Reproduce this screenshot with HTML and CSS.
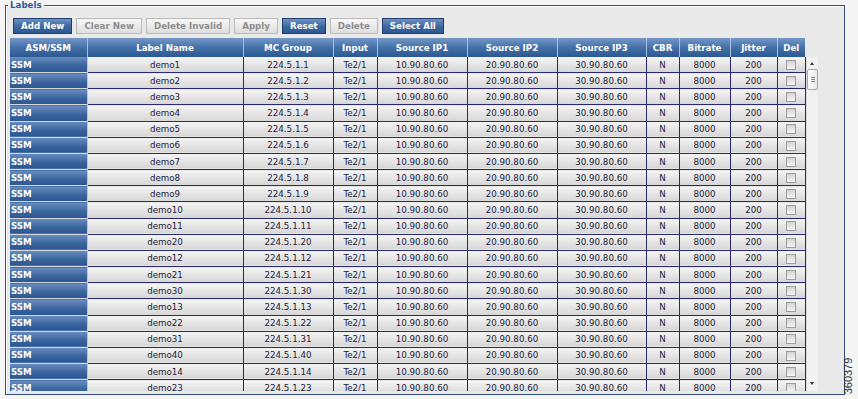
FILE: index.html
```html
<!DOCTYPE html>
<html lang="en">
<head>
<meta charset="UTF-8">
<title>Labels</title>
<link rel="stylesheet" href="styles.css">
</head>
<body>
<fieldset class="labels">
    <legend>Labels</legend>
    <div class="toolbar">
        <button class="btn">Add New</button>
        <button class="btn" disabled>Clear New</button>
        <button class="btn" disabled>Delete Invalid</button>
        <button class="btn" disabled>Apply</button>
        <button class="btn">Reset</button>
        <button class="btn" disabled>Delete</button>
        <button class="btn">Select All</button>
    </div>
    <table class="grid grid-head">
        <colgroup>
            <col class="c-mode"><col class="c-name"><col class="c-group"><col class="c-input">
            <col class="c-ip"><col class="c-ip"><col class="c-ip3"><col class="c-cbr">
            <col class="c-rate"><col class="c-jitter"><col class="c-del">
        </colgroup>
        <tr>
            <th>ASM/SSM</th><th>Label Name</th><th>MC Group</th><th>Input</th>
            <th>Source IP1</th><th>Source IP2</th><th>Source IP3</th><th>CBR</th>
            <th>Bitrate</th><th>Jitter</th><th>Del</th>
        </tr>
    </table>
    <div class="grid-body">
        <div class="grid-scroll">
            <table class="grid">
                <colgroup>
                    <col class="c-mode"><col class="c-name"><col class="c-group"><col class="c-input">
                    <col class="c-ip"><col class="c-ip"><col class="c-ip3"><col class="c-cbr">
                    <col class="c-rate"><col class="c-jitter"><col class="c-del">
                </colgroup>
                <tr><td class="mode">SSM</td><td>demo1</td><td>224.5.1.1</td><td>Te2/1</td><td>10.90.80.60</td><td>20.90.80.60</td><td>30.90.80.60</td><td>N</td><td>8000</td><td>200</td><td><input type="checkbox"></td></tr>
                <tr><td class="mode">SSM</td><td>demo2</td><td>224.5.1.2</td><td>Te2/1</td><td>10.90.80.60</td><td>20.90.80.60</td><td>30.90.80.60</td><td>N</td><td>8000</td><td>200</td><td><input type="checkbox"></td></tr>
                <tr><td class="mode">SSM</td><td>demo3</td><td>224.5.1.3</td><td>Te2/1</td><td>10.90.80.60</td><td>20.90.80.60</td><td>30.90.80.60</td><td>N</td><td>8000</td><td>200</td><td><input type="checkbox"></td></tr>
                <tr><td class="mode">SSM</td><td>demo4</td><td>224.5.1.4</td><td>Te2/1</td><td>10.90.80.60</td><td>20.90.80.60</td><td>30.90.80.60</td><td>N</td><td>8000</td><td>200</td><td><input type="checkbox"></td></tr>
                <tr><td class="mode">SSM</td><td>demo5</td><td>224.5.1.5</td><td>Te2/1</td><td>10.90.80.60</td><td>20.90.80.60</td><td>30.90.80.60</td><td>N</td><td>8000</td><td>200</td><td><input type="checkbox"></td></tr>
                <tr><td class="mode">SSM</td><td>demo6</td><td>224.5.1.6</td><td>Te2/1</td><td>10.90.80.60</td><td>20.90.80.60</td><td>30.90.80.60</td><td>N</td><td>8000</td><td>200</td><td><input type="checkbox"></td></tr>
                <tr><td class="mode">SSM</td><td>demo7</td><td>224.5.1.7</td><td>Te2/1</td><td>10.90.80.60</td><td>20.90.80.60</td><td>30.90.80.60</td><td>N</td><td>8000</td><td>200</td><td><input type="checkbox"></td></tr>
                <tr><td class="mode">SSM</td><td>demo8</td><td>224.5.1.8</td><td>Te2/1</td><td>10.90.80.60</td><td>20.90.80.60</td><td>30.90.80.60</td><td>N</td><td>8000</td><td>200</td><td><input type="checkbox"></td></tr>
                <tr><td class="mode">SSM</td><td>demo9</td><td>224.5.1.9</td><td>Te2/1</td><td>10.90.80.60</td><td>20.90.80.60</td><td>30.90.80.60</td><td>N</td><td>8000</td><td>200</td><td><input type="checkbox"></td></tr>
                <tr><td class="mode">SSM</td><td>demo10</td><td>224.5.1.10</td><td>Te2/1</td><td>10.90.80.60</td><td>20.90.80.60</td><td>30.90.80.60</td><td>N</td><td>8000</td><td>200</td><td><input type="checkbox"></td></tr>
                <tr><td class="mode">SSM</td><td>demo11</td><td>224.5.1.11</td><td>Te2/1</td><td>10.90.80.60</td><td>20.90.80.60</td><td>30.90.80.60</td><td>N</td><td>8000</td><td>200</td><td><input type="checkbox"></td></tr>
                <tr><td class="mode">SSM</td><td>demo20</td><td>224.5.1.20</td><td>Te2/1</td><td>10.90.80.60</td><td>20.90.80.60</td><td>30.90.80.60</td><td>N</td><td>8000</td><td>200</td><td><input type="checkbox"></td></tr>
                <tr><td class="mode">SSM</td><td>demo12</td><td>224.5.1.12</td><td>Te2/1</td><td>10.90.80.60</td><td>20.90.80.60</td><td>30.90.80.60</td><td>N</td><td>8000</td><td>200</td><td><input type="checkbox"></td></tr>
                <tr><td class="mode">SSM</td><td>demo21</td><td>224.5.1.21</td><td>Te2/1</td><td>10.90.80.60</td><td>20.90.80.60</td><td>30.90.80.60</td><td>N</td><td>8000</td><td>200</td><td><input type="checkbox"></td></tr>
                <tr><td class="mode">SSM</td><td>demo30</td><td>224.5.1.30</td><td>Te2/1</td><td>10.90.80.60</td><td>20.90.80.60</td><td>30.90.80.60</td><td>N</td><td>8000</td><td>200</td><td><input type="checkbox"></td></tr>
                <tr><td class="mode">SSM</td><td>demo13</td><td>224.5.1.13</td><td>Te2/1</td><td>10.90.80.60</td><td>20.90.80.60</td><td>30.90.80.60</td><td>N</td><td>8000</td><td>200</td><td><input type="checkbox"></td></tr>
                <tr><td class="mode">SSM</td><td>demo22</td><td>224.5.1.22</td><td>Te2/1</td><td>10.90.80.60</td><td>20.90.80.60</td><td>30.90.80.60</td><td>N</td><td>8000</td><td>200</td><td><input type="checkbox"></td></tr>
                <tr><td class="mode">SSM</td><td>demo31</td><td>224.5.1.31</td><td>Te2/1</td><td>10.90.80.60</td><td>20.90.80.60</td><td>30.90.80.60</td><td>N</td><td>8000</td><td>200</td><td><input type="checkbox"></td></tr>
                <tr><td class="mode">SSM</td><td>demo40</td><td>224.5.1.40</td><td>Te2/1</td><td>10.90.80.60</td><td>20.90.80.60</td><td>30.90.80.60</td><td>N</td><td>8000</td><td>200</td><td><input type="checkbox"></td></tr>
                <tr><td class="mode">SSM</td><td>demo14</td><td>224.5.1.14</td><td>Te2/1</td><td>10.90.80.60</td><td>20.90.80.60</td><td>30.90.80.60</td><td>N</td><td>8000</td><td>200</td><td><input type="checkbox"></td></tr>
                <tr><td class="mode">SSM</td><td>demo23</td><td>224.5.1.23</td><td>Te2/1</td><td>10.90.80.60</td><td>20.90.80.60</td><td>30.90.80.60</td><td>N</td><td>8000</td><td>200</td><td><input type="checkbox"></td></tr>
                <tr><td class="mode">SSM</td><td>demo32</td><td>224.5.1.32</td><td>Te2/1</td><td>10.90.80.60</td><td>20.90.80.60</td><td>30.90.80.60</td><td>N</td><td>8000</td><td>200</td><td><input type="checkbox"></td></tr>
                <tr><td class="mode">SSM</td><td>demo41</td><td>224.5.1.41</td><td>Te2/1</td><td>10.90.80.60</td><td>20.90.80.60</td><td>30.90.80.60</td><td>N</td><td>8000</td><td>200</td><td><input type="checkbox"></td></tr>
            </table>
        </div>
        <div class="scrollbar">
            <span class="arrow up"></span>
            <span class="thumb"><i></i><i></i><i></i></span>
            <span class="arrow down"></span>
        </div>
    </div>
</fieldset>
<div class="fig-id">360379</div>
</body>
</html>
```

FILE: styles.css
```css
html, body {
    margin: 0;
    padding: 0;
    height: 100%;
    background-color: #f4f4f4;
    font-family: "DejaVu Sans", Verdana, sans-serif;
    font-size: 8.7px;
    color: #1c1c3c;
}
body {
    position: relative;
    padding: 0 13px 0 5px;
    box-sizing: border-box;
}
.labels {
    margin: 0;
    padding: 7px 3px 3px 4px;
    border: 1px solid #35507c;
    box-shadow: inset 1px 1px 0 #fbfbfb;
    background-color: #e9e9e9;
    min-width: 0;
}
.labels legend {
    margin-left: -2px;
    padding: 0 2px;
    font-weight: bold;
    font-size: 8.7px;
    line-height: 11px;
    color: #2e5d9a;
}
.toolbar {
    display: flex;
    gap: 4px;
    margin-left: 3px;
    margin-bottom: 4px;
}
.btn {
    height: 16px;
    padding: 0 7px;
    font-family: inherit;
    font-size: 8.7px;
    font-weight: bold;
    color: white;
    border: 1px solid #1e3f6f;
    background: linear-gradient(#6c90c2, #3c679f 55%, #2d5893);
    cursor: pointer;
}
.btn:disabled {
    color: #8e8e8e;
    border-color: #bababa;
    background: linear-gradient(#f7f7f7, #dedede);
    cursor: default;
}
.grid {
    width: 795px;
    table-layout: fixed;
    border-collapse: collapse;
}
.c-mode { width: 77px; }
.c-name { width: 156px; }
.c-group { width: 90px; }
.c-input { width: 44px; }
.c-ip { width: 90px; }
.c-ip3 { width: 89px; }
.c-cbr { width: 33px; }
.c-rate { width: 51px; }
.c-jitter { width: 47px; }
.c-del { width: 28px; }
.grid th {
    height: 19px;
    padding: 0;
    font-weight: bold;
    color: white;
    border-left: 1px solid #a9bedb;
    background: linear-gradient(#7597c7, #4470a8 50%, #2c5892);
}
.grid th:first-child {
    border-left: none;
}
.grid-body {
    display: flex;
    height: 334px;
    overflow: hidden;
}
.grid-scroll {
    width: 796px;
    overflow: hidden;
}
.grid td {
    height: 15.16px;
    padding: 0;
    text-align: center;
    border: 1px solid #29296d;
    border-top: none;
    background: linear-gradient(#f5f5f5, #e2e2e2 60%, #d6d6d6);
    white-space: nowrap;
    overflow: hidden;
}
.grid td.mode {
    text-align: left;
    padding-left: 1px;
    font-weight: bold;
    color: white;
    border: none;
    border-bottom: 1px solid #d4d8de;
    border-right: 1px solid #bcc6d2;
    background: linear-gradient(#6a8ec0, #3b669e 55%, #2b5690);
}
.grid input[type="checkbox"] {
    width: 10px;
    height: 10px;
    margin: 0;
    vertical-align: middle;
    appearance: none;
    border: 1px solid #9c9c9c;
    background: linear-gradient(#d4d4d4, #f6f6f6);
}
.scrollbar {
    position: relative;
    width: 11px;
    flex-shrink: 0;
    background-color: #f1f1f1;
    border-left: 1px solid #dadada;
}
.scrollbar .arrow {
    position: absolute;
    left: 3px;
    width: 0;
    height: 0;
    border-left: 2px solid transparent;
    border-right: 2px solid transparent;
}
.scrollbar .up {
    top: 5px;
    border-bottom: 3px solid #333;
}
.scrollbar .down {
    bottom: 6px;
    border-top: 3px solid #333;
}
.scrollbar .thumb {
    position: absolute;
    top: 12px;
    left: 0;
    width: 9px;
    height: 19px;
    display: flex;
    flex-direction: column;
    justify-content: center;
    align-items: center;
    gap: 1px;
    border: 1px solid #a8a8a8;
    border-radius: 2px;
    background: linear-gradient(90deg, #ffffff, #e8e8e8);
}
.scrollbar .thumb i {
    width: 4px;
    height: 1px;
    background-color: #8a8a8a;
}
.fig-id {
    position: absolute;
    right: -9px;
    bottom: 17px;
    transform: rotate(-90deg);
    font-family: "Liberation Sans", Arial, sans-serif;
    font-size: 11px;
    color: #333;
}
```
